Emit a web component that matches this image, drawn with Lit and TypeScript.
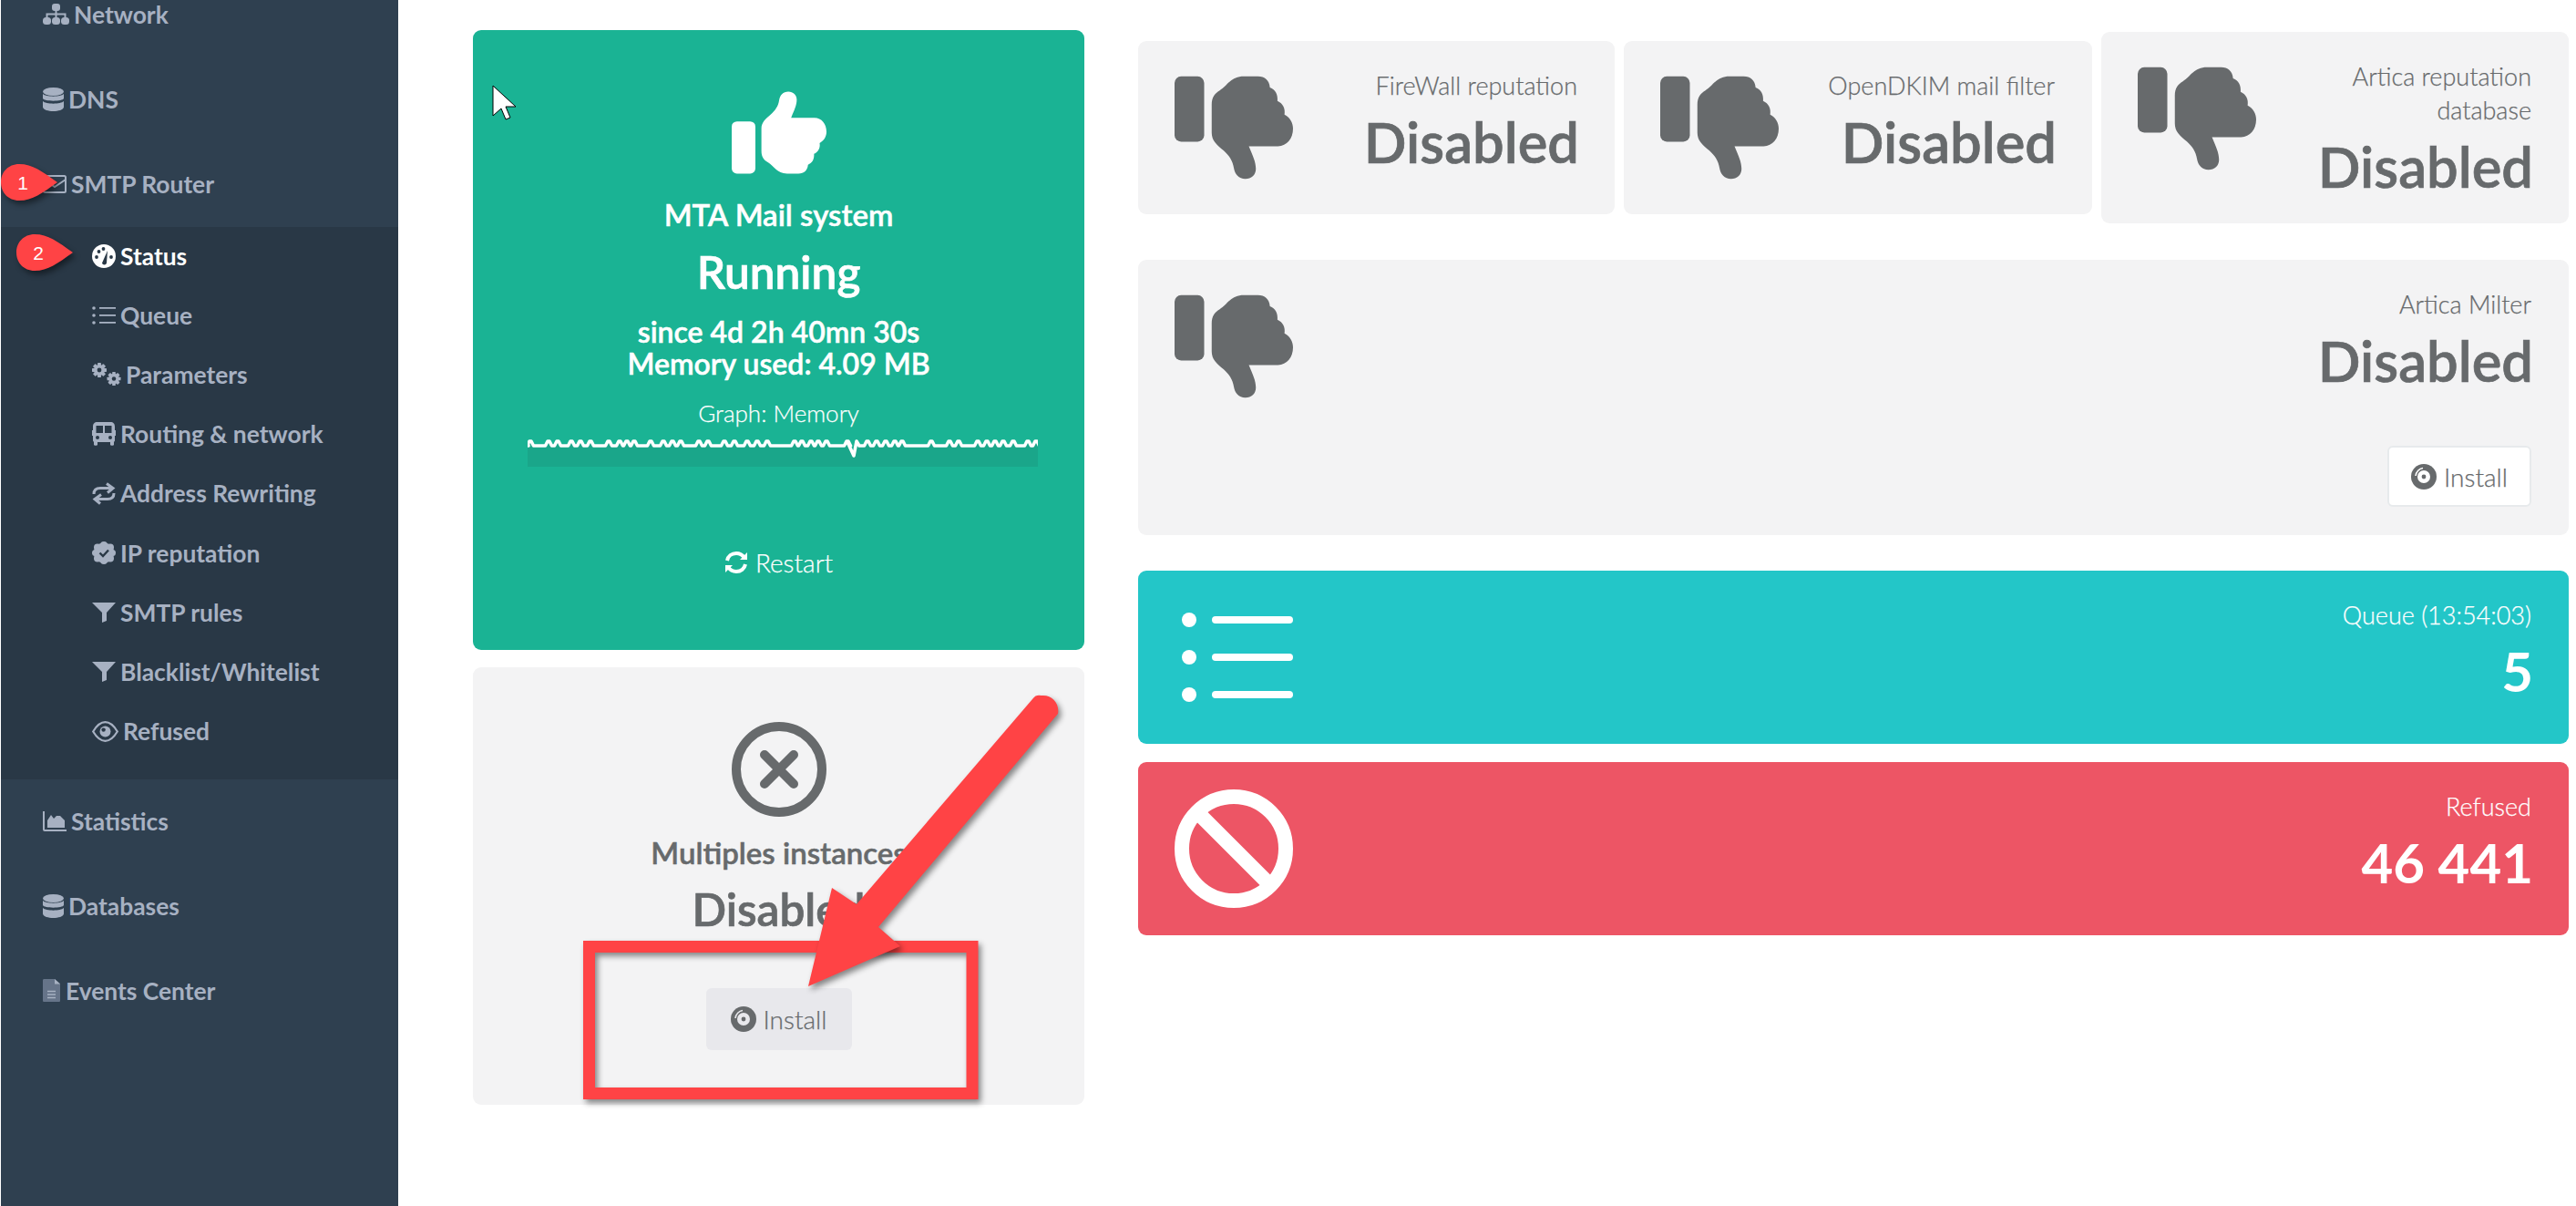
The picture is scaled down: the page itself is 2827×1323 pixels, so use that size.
import { css, html, LitElement, svg } from 'lit';
import { customElement } from 'lit/decorators.js';
import { classMap } from 'lit/directives/class-map.js';

// Icons
// -----------------------------------------------------------------------------
const HAND = 'M141 0 C128 0 120 9 118 22 C116 36 108 47 98 56 C84 68 74 76 74 92 V148 C74 162 80 170 90 176 C106 186 112 204 138 204 H166 C180 204 189 196 190 182 C201 178 206 168 205 155 C216 150 221 140 219 128 C230 122 236 112 236 100 C236 80 224 65 206 65 H148 C156 46 162 34 162 20 C162 8 153 0 141 0 Z';

const thumb = (down: boolean, w: number, h: number) => html`<svg width=${w} height=${h} viewBox="0 0 236 204" fill="currentColor">
  <g transform=${down ? 'matrix(1 0 0 -1 0 204)' : ''}>
    <rect x="0" y="74" width="59" height="130" rx="13"></rect>
    <path d=${HAND}></path>
  </g>
</svg>`;

const disc = () => html`<svg width="28" height="28" viewBox="0 0 28 28" class="disc">
  <circle cx="14" cy="14" r="14" fill="currentColor"></circle>
  <circle class="hole" cx="14" cy="14" r="7"></circle>
  <circle cx="14" cy="14" r="2.4" fill="currentColor"></circle>
  <path class="shine" d="M5 13 C5.5 8.5 9 5 13 4.5" fill="none" stroke-width="1.6"></path>
</svg>`;

const database = () => html`<svg width="23" height="26" viewBox="0 0 23 26" fill="currentColor">
  <ellipse cx="11.5" cy="4.5" rx="11.5" ry="4.5"></ellipse>
  <path d="M0 7 C3 10.5 20 10.5 23 7 V12 C22 15.5 1 15.5 0 12 Z"></path>
  <path d="M0 15 C3 18.5 20 18.5 23 15 V21.5 C22 27.5 1 27.5 0 21.5 Z"></path>
</svg>`;

const gear = (cx: number, cy: number, r: number) => svg`
  <g transform=${`translate(${cx} ${cy})`} fill="currentColor">
    ${[0, 45, 90, 135].map(
      (a) => svg`<rect x=${-r} y=${-r * 0.24} width=${r * 2} height=${r * 0.48} rx="0.6" transform=${`rotate(${a})`}></rect>`
    )}
    <circle r=${r * 0.76}></circle>
    <circle r=${r * 0.3} fill="#293846"></circle>
  </g>`;

const navIcons: Record<string, () => unknown> = {
  network: () => html`<svg width="29" height="23" viewBox="0 0 29 23" fill="currentColor">
    <rect x="10" y="0" width="9" height="8" rx="3"></rect>
    <path d="M4.5 16 V11.5 H24.5 V16 M14.5 7 V16" fill="none" stroke="currentColor" stroke-width="2"></path>
    <rect x="0" y="15" width="9" height="8" rx="3.5"></rect>
    <rect x="10" y="15" width="9" height="8" rx="3.5"></rect>
    <rect x="20" y="15" width="9" height="8" rx="3.5"></rect>
  </svg>`,
  database,
  mail: () => html`<svg width="26" height="20" viewBox="0 0 26 20" fill="none" stroke="currentColor" stroke-width="2">
    <rect x="1" y="1" width="24" height="18" rx="1.5"></rect>
    <path d="M1 5 L13 13 L25 5"></path>
  </svg>`,
  gauge: () => html`<svg width="26" height="26" viewBox="0 0 26 26">
    <circle cx="13" cy="13" r="13" fill="currentColor"></circle>
    <g fill="#293846">
      <circle cx="5" cy="14" r="1.9"></circle>
      <circle cx="7.5" cy="8" r="1.9"></circle>
      <circle cx="12.5" cy="5" r="1.9"></circle>
      <circle cx="21" cy="14" r="1.9"></circle>
      <path d="M11 20.5 L17 7 L16 20.5 C15.5 23 11.5 23 11 20.5 Z"></path>
    </g>
  </svg>`,
  list: () => html`<svg width="26" height="20" viewBox="0 0 26 20" fill="currentColor">
    <circle cx="2" cy="2" r="1.8"></circle>
    <circle cx="2" cy="10" r="1.8"></circle>
    <circle cx="2" cy="18" r="1.8"></circle>
    <rect x="8" y="1" width="18" height="1.8"></rect>
    <rect x="8" y="9" width="18" height="1.8"></rect>
    <rect x="8" y="17" width="18" height="1.8"></rect>
  </svg>`,
  cogs: () => html`<svg width="32" height="25" viewBox="0 0 32 25">
    ${gear(8, 8, 8)}${gear(24, 17.5, 7.5)}
  </svg>`,
  bus: () => html`<svg width="26" height="26" viewBox="0 0 26 26" fill="currentColor">
    <path fill-rule="evenodd" d="M6 0 H20 C23.5 0 25 2 25 5 V9 H26 V15 H25 V20 C25 21 24.5 21.5 24 21.5 V25 C24 26 20 26 20 25 V22 H6 V25 C6 26 2 26 2 25 V21.5 C1.5 21.5 1 21 1 20 V15 H0 V9 H1 V5 C1 2 2.5 0 6 0 Z M4.5 4 V12 H12 V4 Z M14 4 V12 H21.5 V4 Z"></path>
    <circle cx="6" cy="17" r="2" fill="#293846"></circle>
    <circle cx="20" cy="17" r="2" fill="#293846"></circle>
  </svg>`,
  exchange: () => html`<svg width="26" height="25" viewBox="0 0 26 25" fill="none" stroke="currentColor" stroke-width="3">
    <path d="M2 13 C2 8 5 6.5 9 6.5 H23"></path>
    <path d="M16 1.5 L23 6.5 L17 11.5"></path>
    <path d="M24 12 C24 17 21 18.5 17 18.5 H3"></path>
    <path d="M10 13.5 L3 18.5 L9 23.5"></path>
  </svg>`,
  badge: () => html`<svg width="26" height="25" viewBox="0 0 26 25">
    <g fill="currentColor">
      <circle cx="13" cy="12.5" r="11"></circle>
      <circle cx="13" cy="4" r="4"></circle><circle cx="13" cy="21" r="4"></circle>
      <circle cx="6" cy="6.5" r="4"></circle><circle cx="6" cy="18.5" r="4"></circle>
      <circle cx="20" cy="6.5" r="4"></circle><circle cx="20" cy="18.5" r="4"></circle>
      <circle cx="3.5" cy="12.5" r="3.5"></circle><circle cx="22.5" cy="12.5" r="3.5"></circle>
    </g>
    <path d="M8.5 12.5 L12 16 L18 9.5" fill="none" stroke="#293846" stroke-width="2.4"></path>
  </svg>`,
  filter: () => html`<svg width="26" height="22" viewBox="0 0 26 22" fill="currentColor">
    <path d="M0 0 H26 L16 11 V20 L11 22 V11 Z"></path>
  </svg>`,
  eye: () => html`<svg width="29" height="23" viewBox="0 0 29 23">
    <path d="M1.2 11.5 C6 3.5 10 1.2 14.5 1.2 C19 1.2 23 3.5 27.8 11.5 C23 19.5 19 21.8 14.5 21.8 C10 21.8 6 19.5 1.2 11.5 Z" fill="none" stroke="currentColor" stroke-width="2.2"></path>
    <circle cx="14.5" cy="11.5" r="6" fill="currentColor"></circle>
    <circle cx="12.6" cy="9.6" r="2.2" fill="#293846"></circle>
  </svg>`,
  chart: () => html`<svg width="26" height="22" viewBox="0 0 26 22" fill="currentColor">
    <path d="M1 0 V20 C1 20.6 1.4 21 2 21 H26" fill="none" stroke="currentColor" stroke-width="2"></path>
    <path d="M5 18 V10 L9 4 L12 8 L15 5 L19 5 L24 10 V18 Z"></path>
  </svg>`,
  file: () => html`<svg width="20" height="25" viewBox="0 0 20 25">
    <path d="M1.5 0 H13 L19 5 V23.5 C19 24.5 18.5 25 17.5 25 H1.5 C0.5 25 0 24.5 0 23.5 V1.5 C0 0.5 0.5 0 1.5 0 Z" fill="#667489"></path>
    <path d="M13 0 L19 5.5 H13 Z" fill="#a7b1c2"></path>
    <path d="M5 13.5 H14 M5 17 H14 M5 20.5 H14" stroke="#a7b1c2" stroke-width="1.4"></path>
  </svg>`,
};

// Sidebar data
// -----------------------------------------------------------------------------
const topBefore = [
  { icon: 'network', label: 'Network' },
  { icon: 'database', label: 'DNS' },
  { icon: 'mail', label: 'SMTP Router' },
];
const subItems = [
  { icon: 'gauge', label: 'Status', active: true },
  { icon: 'list', label: 'Queue' },
  { icon: 'cogs', label: 'Parameters' },
  { icon: 'bus', label: 'Routing & network' },
  { icon: 'exchange', label: 'Address Rewriting' },
  { icon: 'badge', label: 'IP reputation' },
  { icon: 'filter', label: 'SMTP rules' },
  { icon: 'filter', label: 'Blacklist/Whitelist' },
  { icon: 'eye', label: 'Refused' },
];
const topAfter = [
  { icon: 'chart', label: 'Statistics' },
  { icon: 'database', label: 'Databases' },
  { icon: 'file', label: 'Events Center' },
];

// Sparkline: x position of each little peak, base line at y=8, peaks at y=3
// -----------------------------------------------------------------------------
const PEAKS = [3, 23, 33, 48, 58, 69, 89, 101, 109, 117, 135, 149, 159, 168, 188, 198, 216, 227, 241, 252, 263,
  293, 301, 311, 319, 328, 351, 361, 373, 383, 393, 403, 411, 443, 463, 473, 494, 504, 513, 522, 533, 549, 558];

const sparkLine = () => {
  const pts: string[] = ['0,3', '1,8'];
  for (const p of PEAKS) {
    if (p === 361) {
      pts.push('352,6', '358,19', '361,3', '364,8');
      continue;
    }
    pts.push(`${p - 3.5},8`, `${p - 1},3`, `${p + 1},3`, `${p + 3.5},8`);
  }
  pts.push('560,3');
  return pts.join(' ');
};

@customElement('app-root')
export class AppRoot extends LitElement {
  static override styles = css`
    :host {
      display: block;
      position: relative;
      width: 2827px;
      height: 1323px;
      overflow: hidden;
      background: #fff;
      font-family: Lato, "Liberation Sans", sans-serif;
      color: #676a6c;
    }
    .page {
      display: flex;
      height: 100%;
    }

    /* sidebar */
    .sidebar {
      flex: none;
      width: 436px;
      margin-left: 1px;
      background: #2f4050;
      font-size: 26.4px;
      font-weight: 700;
      color: #a7b1c2;
    }
    .nav {
      margin-top: -30px;
    }
    .top-item {
      display: flex;
      align-items: center;
      gap: 5px;
      height: 93px;
      padding: 0 0 2px 46px;
      box-sizing: border-box;
    }
    .sub {
      background: #293846;
      padding: 0 0 19px;
      height: 606px;
      box-sizing: border-box;
    }
    .sub-item {
      display: flex;
      align-items: center;
      gap: 5px;
      height: 65.2px;
      padding: 0 0 2px 100px;
      box-sizing: border-box;
    }
    .sub-item.active {
      color: #fff;
    }
    .sub-item svg, .top-item svg {
      flex: none;
    }

    /* content */
    .main {
      flex: 1;
      display: flex;
      gap: 59px;
      padding: 33px 0 0 82px;
    }
    .left {
      flex: none;
      width: 671px;
      display: flex;
      flex-direction: column;
      gap: 19px;
    }
    .right {
      flex: none;
      width: 1570px;
      padding-top: 2px;
      display: flex;
      flex-direction: column;
    }
    .tile {
      border-radius: 9px;
      box-sizing: border-box;
    }
    .status {
      display: flex;
      flex-direction: column;
      align-items: center;
      text-align: center;
    }
    .status.green {
      height: 680px;
      padding-top: 67px;
      background: #1ab394;
      color: #fff;
    }
    .status.gray {
      height: 480px;
      padding-top: 60px;
      background: #f3f3f4;
    }
    .status-title {
      font-size: 33px;
      font-weight: 600;
      line-height: 40px;
      -webkit-text-stroke: 0.5px currentColor;
    }
    .status > svg {
      display: block;
      flex: none;
    }
    .green .status-title {
      margin-top: 24px;
    }
    .gray .status-title {
      margin-top: 19px;
    }
    .running {
      margin-top: 13px;
      font-size: 49.5px;
      font-weight: 600;
      line-height: 60px;
      -webkit-text-stroke: 0.7px currentColor;
    }
    .since {
      margin-top: 18px;
      font-size: 32px;
      font-weight: 600;
      line-height: 35px;
      -webkit-text-stroke: 0.5px currentColor;
    }
    .graph {
      margin-top: 19px;
      font-size: 26px;
      font-weight: 300;
      line-height: 36px;
      -webkit-text-stroke: 0.25px currentColor;
    }
    .status > .spark {
      margin: 10px 0 0 8px;
    }
    .restart {
      display: flex;
      align-items: center;
      gap: 8px;
      margin-top: 87px;
      font-size: 28px;
      font-weight: 300;
      line-height: 36px;
      -webkit-text-stroke: 0.25px currentColor;
    }
    .disabled-big {
      margin-top: 9px;
      font-size: 49.5px;
      font-weight: 600;
      line-height: 66px;
      -webkit-text-stroke: 0.7px currentColor;
    }
    .btn {
      --btn: #fff;
      display: flex;
      align-items: center;
      justify-content: center;
      gap: 8px;
      height: 68px;
      box-sizing: border-box;
      border-radius: 6px;
      font-size: 28px;
      font-weight: 300;
      -webkit-text-stroke: 0.25px currentColor;
      background: var(--btn);
    }
    .btn.pressed {
      --btn: #e8e8ec;
      width: 160px;
      margin-top: 54px;
    }
    .btn.plain {
      width: 158px;
      height: 67px;
      margin-top: 61px;
      border: 2px solid #e7eaec;
    }
    .hole {
      fill: var(--btn);
    }
    .shine {
      stroke: var(--btn);
    }

    .row {
      display: grid;
      grid-template-columns: 523px 514px 513px;
      align-items: center;
      gap: 10px;
    }
    .card {
      display: flex;
      justify-content: space-between;
      align-items: flex-start;
      min-height: 190px;
      padding: 30px 41px 30px 40px;
      background: #f3f3f4;
    }
    .card.wide {
      margin-top: 40px;
      min-height: 302px;
    }
    .card.teal {
      margin-top: 39px;
      background: #23c6c8;
      color: #fff;
    }
    .card.red {
      margin-top: 20px;
      background: #ed5565;
      color: #fff;
    }
    .card-icon {
      flex: none;
      margin-top: 8px;
    }
    .card-icon svg {
      display: block;
    }
    .teal .card-icon {
      margin-top: 16px;
    }
    .red .card-icon {
      margin-top: 0;
    }
    .card-body {
      display: flex;
      flex-direction: column;
      align-items: flex-end;
      text-align: right;
    }
    .card-title {
      max-width: 260px;
      font-size: 27px;
      font-weight: 300;
      line-height: 37px;
      -webkit-text-stroke: 0.25px currentColor;
    }
    .card-value {
      margin: 10px -2px 0 0;
      font-size: 61.5px;
      font-weight: 600;
      line-height: 66px;
      -webkit-text-stroke: 0.7px currentColor;
    }
    .teal .card-value, .red .card-value {
      font-size: 60px;
      font-weight: 700;
      -webkit-text-stroke: 0;
    }

    /* annotations laid over the screenshot */
    .marks {
      position: absolute;
      inset: 0;
      pointer-events: none;
    }
    .shadowed {
      filter: drop-shadow(3px 4px 3px rgba(0, 0, 0, 0.45));
    }
    .bubble-num {
      font-family: "Liberation Sans", Arial, sans-serif;
      font-size: 21px;
      fill: #fff;
    }
  `;

  private card(title: string, value: string, icon: unknown, extra = '', btn = false) {
    const classes: Record<string, boolean> = { tile: true, card: true };
    if (extra) classes[extra] = true;
    return html`<div class=${classMap(classes)}>
      <div class="card-icon">${icon}</div>
      <div class="card-body">
        <div class="card-title">${title}</div>
        <div class="card-value">${value}</div>
        ${btn ? html`<div class="btn plain">${disc()}<span>Install</span></div>` : ''}
      </div>
    </div>`;
  }

  private navItem(item: { icon: string; label: string; active?: boolean }, sub: boolean) {
    const classes = { 'top-item': !sub, 'sub-item': sub, active: !!item.active };
    return html`<div class=${classMap(classes)}>${navIcons[item.icon]()}<span>${item.label}</span></div>`;
  }

  private marks() {
    return html`<svg class="marks" width="2827" height="1323" viewBox="0 0 2827 1323">
      <g class="shadowed">
        <path d="M63 200 C46 188 36 180 21 180 C9 180 1 189 1 200 C1 211 9 220 21 220 C36 220 46 212 63 200 Z" fill="#ff4345"></path>
        <path d="M80 277 C63 265 53 257 38 257 C26 257 18 266 18 277 C18 288 26 297 38 297 C53 297 63 289 80 277 Z" fill="#ff4345"></path>
      </g>
      <text class="bubble-num" x="25" y="200" text-anchor="middle" dominant-baseline="central">1</text>
      <text class="bubble-num" x="42" y="277" text-anchor="middle" dominant-baseline="central">2</text>

      <path d="M541 94 V127 L550 119 L555 131 L560 129 L555 117 H566 Z" fill="#fff" stroke="#000" stroke-width="1"></path>

      <g class="shadowed">
        <rect x="646.5" y="1038.5" width="420.5" height="161" fill="none" stroke="#ff4345" stroke-width="13"></rect>
      </g>
      <g class="shadowed">
        <path d="M1133 767 C1137 761 1141 763 1145 763 C1155 763 1163 772 1161 783 L964 1017 L988 1038 L887 1082 L913 974 L940 992 Z" fill="#ff4345"></path>
      </g>
    </svg>`;
  }

  override render() {
    const thumbDown = thumb(true, 130, 114);
    const listIcon = html`<svg width="130" height="98" viewBox="0 0 130 98" fill="#fff">
      <circle cx="16" cy="8" r="8"></circle>
      <circle cx="16" cy="49" r="8"></circle>
      <circle cx="16" cy="90" r="8"></circle>
      <rect x="41" y="4" width="89" height="8" rx="4"></rect>
      <rect x="41" y="45" width="89" height="8" rx="4"></rect>
      <rect x="41" y="86" width="89" height="8" rx="4"></rect>
    </svg>`;
    const banIcon = html`<svg width="130" height="130" viewBox="0 0 130 130" fill="none" stroke="#fff" stroke-width="16">
      <circle cx="65" cy="65" r="57"></circle>
      <path d="M22 22 L108 108"></path>
    </svg>`;

    return html`<div class="page">
      <aside class="sidebar">
        <div class="nav">
          ${topBefore.map((i) => this.navItem(i, false))}
          <div class="sub">${subItems.map((i) => this.navItem(i, true))}</div>
          ${topAfter.map((i) => this.navItem(i, false))}
        </div>
      </aside>
      <main class="main">
        <section class="left">
          <div class="tile status green">
            ${thumb(false, 104, 91)}
            <div class="status-title">MTA Mail system</div>
            <div class="running">Running</div>
            <div class="since">since 4d 2h 40mn 30s<br />Memory used: 4.09 MB</div>
            <div class="graph">Graph: Memory</div>
            <svg class="spark" width="560" height="31" viewBox="0 0 560 31">
              <polygon points="0,31 ${sparkLine()} 560,31" fill="#1aa68a"></polygon>
              <polyline points=${sparkLine()} fill="none" stroke="#fff" stroke-width="3.6" stroke-linejoin="round"></polyline>
            </svg>
            <div class="restart">
              <svg width="26" height="26" viewBox="0 0 26 26" fill="none" stroke="#fff" stroke-width="4">
                <path d="M3 11 C4 6 8 3 13 3 C17 3 20 5 22 8"></path>
                <path d="M23 15 C22 20 18 23 13 23 C9 23 6 21 4 18"></path>
                <path d="M25 2 V10 H17 Z M1 24 V16 H9 Z" fill="#fff" stroke="none"></path>
              </svg>
              <span>Restart</span>
            </div>
          </div>
          <div class="tile status gray">
            <svg width="104" height="104" viewBox="0 0 104 104" fill="none" stroke="#676a6c">
              <circle cx="52" cy="52" r="47" stroke-width="10"></circle>
              <path d="M36 36 L68 68 M68 36 L36 68" stroke-width="10" stroke-linecap="round"></path>
            </svg>
            <div class="status-title">Multiples instances</div>
            <div class="disabled-big">Disabled</div>
            <div class="btn pressed">${disc()}<span>Install</span></div>
          </div>
        </section>
        <section class="right">
          <div class="row">
            ${this.card('FireWall reputation', 'Disabled', thumbDown)}
            ${this.card('OpenDKIM mail filter', 'Disabled', thumbDown)}
            ${this.card('Artica reputation database', 'Disabled', thumbDown)}
          </div>
          ${this.card('Artica Milter', 'Disabled', thumbDown, 'wide', true)}
          ${this.card('Queue (13:54:03)', '5', listIcon, 'teal')}
          ${this.card('Refused', '46 441', banIcon, 'red')}
        </section>
      </main>
    </div>
    ${this.marks()}`;
  }
}
